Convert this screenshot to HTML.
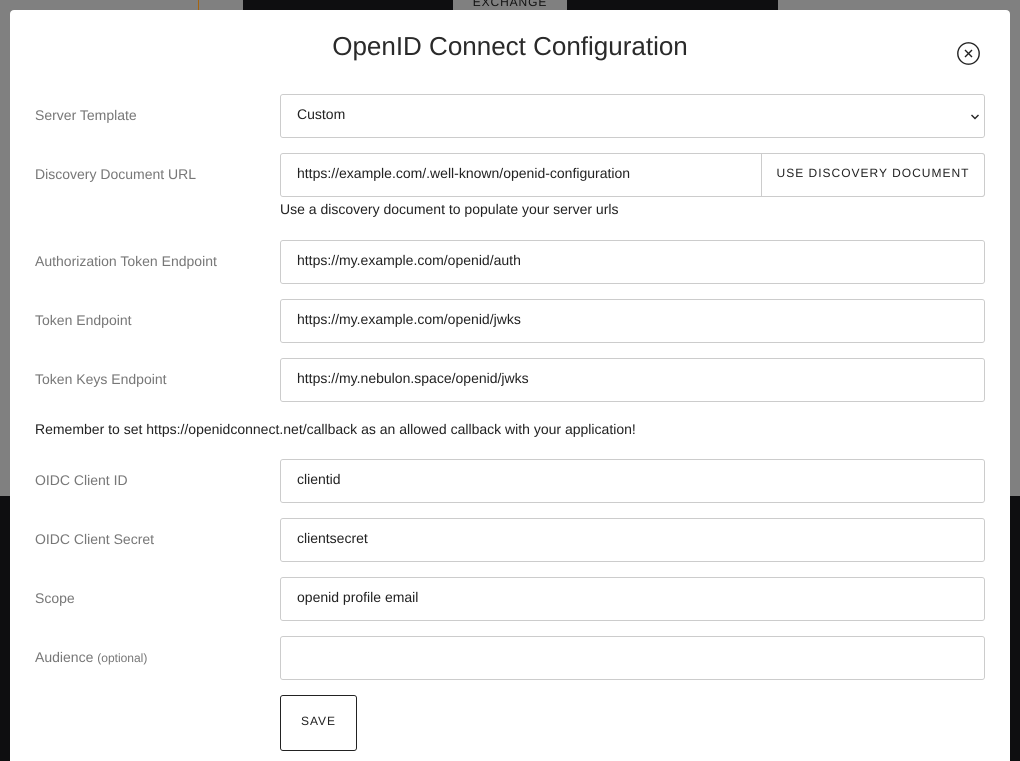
<!DOCTYPE html>
<html><head><meta charset="utf-8"><style>
*{box-sizing:border-box}
html,body{margin:0;padding:0;width:1020px;height:761px;overflow:hidden;background:#808080;font-family:"Liberation Sans",Arial,sans-serif;text-rendering:geometricPrecision}
.a{position:absolute}
.m{position:absolute;left:10px;top:10px;width:1000px;height:751px;background:#fff;border-radius:4px 4px 0 0}
.l{position:absolute;left:35px;font-size:14px;line-height:20px;color:#777;white-space:nowrap}
.i{position:absolute;left:280px;width:705px;height:44px;border:1px solid #ccc;border-radius:3px;background:#fff;font-size:14px;line-height:38px;padding-left:16px;color:#222;white-space:nowrap}
.t{position:absolute;font-size:14px;line-height:20px;color:#222;white-space:nowrap}
</style></head><body>
<div class="a" style="left:0;top:496px;width:1020px;height:265px;background:#0e0e10"></div>
<div class="a" style="left:198px;top:0;width:1px;height:10px;background:#a5640f"></div>
<div class="a" style="left:243px;top:0;width:535px;height:10px;background:#0e0e10"></div>
<div class="a" style="left:453px;top:0;width:114px;height:10px;background:#808080"></div>
<div class="a" style="left:453px;top:-5px;width:114px;text-align:center;font-size:12px;line-height:14px;letter-spacing:.9px;color:#111">EXCHANGE</div>
<div class="m"></div>
<div class="a" style="left:10px;top:29px;width:1000px;text-align:center;font-size:26px;line-height:34px;color:#2a2a2a">OpenID Connect Configuration</div>
<svg class="a" style="left:957px;top:42px" width="24" height="24" viewBox="0 0 24 24" fill="none" stroke="#222"><circle cx="11.5" cy="11.5" r="10.7" stroke-width="1.4"/><path d="M8 8l7 7M15 8l-7 7" stroke-width="1.4"/></svg>

<div class="l" style="top:105px">Server Template</div>
<div class="i" style="top:94px">Custom</div>
<svg class="a" style="left:970px;top:113px" width="10" height="8" viewBox="0 0 10 8" fill="none" stroke="#222" stroke-width="1.4"><path d="M1.5 2l3.5 3.5L8.5 2"/></svg>

<div class="l" style="top:164px">Discovery Document URL</div>
<div class="i" style="top:153px">https://example.com/.well-known/openid-configuration</div>
<div class="a" style="left:761px;top:153px;width:224px;height:44px;border:1px solid #ccc;border-radius:0 3px 3px 0;font-size:12px;line-height:38px;text-align:center;letter-spacing:1px;color:#222;white-space:nowrap">USE DISCOVERY DOCUMENT</div>
<div class="t" style="left:280px;top:199px">Use a discovery document to populate your server urls</div>

<div class="l" style="top:251px">Authorization Token Endpoint</div>
<div class="i" style="top:240px">https://my.example.com/openid/auth</div>
<div class="l" style="top:310px">Token Endpoint</div>
<div class="i" style="top:299px">https://my.example.com/openid/jwks</div>
<div class="l" style="top:369px">Token Keys Endpoint</div>
<div class="i" style="top:358px">https://my.nebulon.space/openid/jwks</div>

<div class="t" style="left:35px;top:419px">Remember to set https://openidconnect.net/callback as an allowed callback with your application!</div>

<div class="l" style="top:470px">OIDC Client ID</div>
<div class="i" style="top:459px">clientid</div>
<div class="l" style="top:529px">OIDC Client Secret</div>
<div class="i" style="top:518px">clientsecret</div>
<div class="l" style="top:588px">Scope</div>
<div class="i" style="top:577px">openid profile email</div>
<div class="l" style="top:647px">Audience <span style="font-size:12px">(optional)</span></div>
<div class="i" style="top:636px"></div>

<div class="a" style="left:280px;top:695px;width:77px;height:56px;border:1px solid #222;border-radius:3px;font-size:12px;line-height:50px;text-align:center;letter-spacing:1px;color:#222">SAVE</div>
</body></html>
